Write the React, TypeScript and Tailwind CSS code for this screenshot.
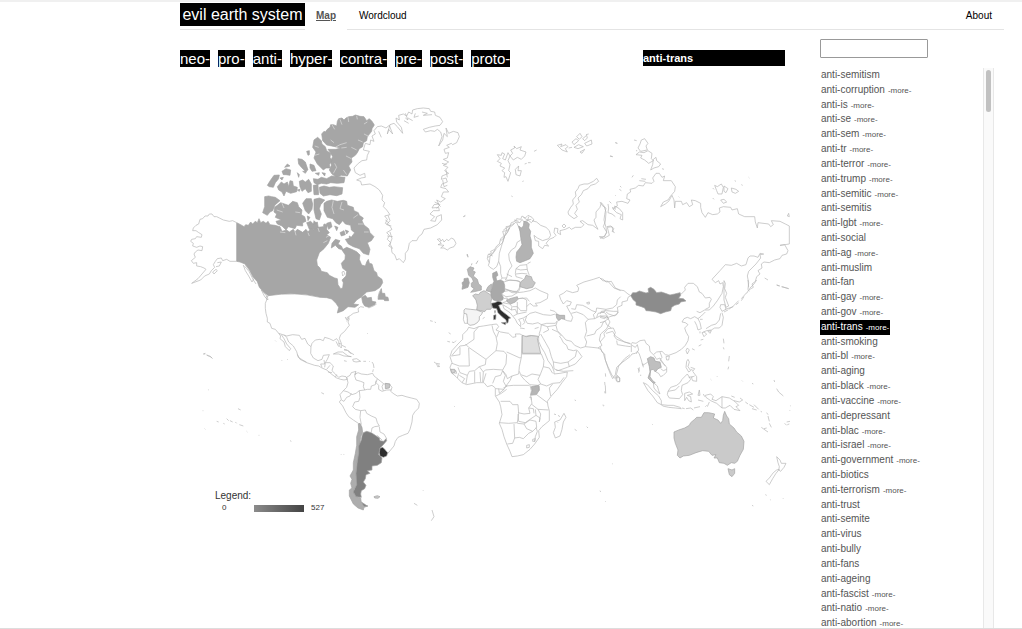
import { useState } from "react";

const prefixes = ["neo-", "pro-", "anti-", "hyper-", "contra-", "pre-", "post-", "proto-"];

const terms: { name: string; more?: boolean }[] = [
  { name: "anti-semitism" },
  { name: "anti-corruption", more: true },
  { name: "anti-is", more: true },
  { name: "anti-se", more: true },
  { name: "anti-sem", more: true },
  { name: "anti-tr", more: true },
  { name: "anti-terror", more: true },
  { name: "anti-trump", more: true },
  { name: "anti-semitic", more: true },
  { name: "anti-semitis" },
  { name: "anti-lgbt", more: true },
  { name: "anti-social" },
  { name: "anti-ag", more: true },
  { name: "anti-muslim" },
  { name: "anti-fan" },
  { name: "anti-gay", more: true },
  { name: "anti-gov", more: true },
  { name: "anti-trans", more: true },
  { name: "anti-smoking" },
  { name: "anti-bl", more: true },
  { name: "anti-aging" },
  { name: "anti-black", more: true },
  { name: "anti-vaccine", more: true },
  { name: "anti-depressant" },
  { name: "anti-blac", more: true },
  { name: "anti-israel", more: true },
  { name: "anti-government", more: true },
  { name: "anti-biotics" },
  { name: "anti-terrorism", more: true },
  { name: "anti-trust" },
  { name: "anti-semite" },
  { name: "anti-virus" },
  { name: "anti-bully" },
  { name: "anti-fans" },
  { name: "anti-ageing" },
  { name: "anti-fascist", more: true },
  { name: "anti-natio", more: true },
  { name: "anti-abortion", more: true },
];

// Each region is drawn in its own grid, three units to one map unit.
// A shape is [fill, path]; "none" leaves only the coast or border line.
type Region = { x: number; y: number; shapes: [string, string][]; channels?: string };

const regions: Region[] = [
  // Arctic Canada
  {
    x: 180,
    y: 90,
    shapes: [
      ["#a6a6a6", "M425 132L432 124 436 126 442 118 450 112 452 104 460 104 470 108 472 94 476 86 486 84 492 90 498 84 506 80 518 79 526 75 540 79 552 80 560 92 568 86 576 94 583 105 576 116 575 124 562 140 560 152 550 158 548 170 538 176 532 188 526 196 514 204 516 216 506 228 512 240 502 258 484 256 470 262 456 252 448 240 454 226 452 212 458 200 450 186 444 178 468 178 482 174 465 170 440 165 428 152Z"],
      ["#a6a6a6", "M402 150L413 142 424 152 426 162 436 170 440 182 452 190 450 202 456 212 448 224 450 234 438 234 430 240 418 228 412 222 402 204 408 186 398 172Z"],
      ["#a6a6a6", "M400 266L414 268 424 262 440 266 455 258 475 260 495 262 492 278 472 280 452 278 440 282 424 280 412 284 402 278Z"],
      ["#a6a6a6", "M418 292L432 288 448 292 462 290 488 293 486 312 470 317 450 314 430 318 420 310Z"],
      ["#a6a6a6", "M432 340L440 334 455 330 472 334 490 331 500 334 502 346 520 352 522 362 535 368 538 376 550 384 546 392 552 405 566 416 570 428 582 440 574 452 562 458 570 478 566 495 550 490 538 476 520 470 505 462 496 448 512 444 524 428 514 420 512 406 496 402 488 392 478 404 468 398 458 386 442 382 432 362Z"],
      ["#a6a6a6", "M284 352L292 346 302 338 314 342 325 346 338 334 352 338 356 350 366 360 364 374 374 380 378 394 368 398 368 408 350 406 345 416 325 410 318 420 306 408 292 402 288 394 304 390 286 382 290 372 282 366Z"],
      ["#a6a6a6", "M254 320L266 318 275 320 286 322 300 332 285 345 278 362 270 366 262 376 248 368 254 350Z"],
      ["#a6a6a6", "M262 286L272 270 282 256 298 255 296 266 286 278 280 292 268 290ZM292 290L304 276 312 282 322 276 326 290 330 272 338 274 340 288 352 292 350 305 332 310 318 304 312 318 306 306 296 300ZM306 244L318 236 332 240 330 256 318 254 310 254ZM314 232L322 222 330 228ZM354 206L366 208 376 216 384 240 376 244 364 232 356 222ZM380 184L388 182 388 194 384 196ZM390 222L402 226 408 242 396 244 390 234ZM352 248L358 254 356 262ZM358 274L368 270 376 276 386 268 394 282 394 304 384 308 376 296 366 304 360 290ZM400 286L414 284 416 314 402 314ZM406 250L418 248 416 256ZM426 248L436 250 434 258ZM368 340L378 326 394 326 398 342 396 358 386 372 376 362ZM402 328L418 324 434 330 422 344 418 356 424 372 418 390 408 386 402 360ZM380 398L392 394 400 402 412 396 416 420 388 418ZM352 300L360 298 358 304ZM382 378L390 382 384 392ZM440 400L452 396 456 410 446 418ZM402 392L410 400 400 404ZM464 408L474 412 470 422ZM300 264L310 262 306 270ZM368 244L380 244 376 250ZM480 428L492 422 496 434 484 438Z"],
    ],
    channels: "M456 104L464 118M480 88L486 104M504 82L506 96M530 78L532 88M562 96L552 102M568 140L552 132M548 156L534 150M530 180L514 172M500 158L480 164 466 172M484 174L500 172M514 206L498 198M404 168L416 172M404 196L418 192M290 360L308 366M306 340L312 354M360 368L346 366M460 332L456 352 462 372M486 336L480 356 492 360M534 374L520 384M550 402L534 402M566 426L552 426M460 250L470 232 464 220M500 254L490 240M452 150L462 158",
  },
  // Canada, Alaska, United States
  {
    x: 180,
    y: 200,
    shapes: [
      ["#a6a6a6", "M170 68L182 74 192 80 197 74 205 76 212 66 218 72 226 64 232 68 237 56 242 68 250 64 258 70 264 64 270 74 285 76 300 80 306 94 320 90 328 96 340 88 345 96 352 88 368 97 378 88 384 96 394 84 400 90 414 82 430 80 432 72 442 74 440 88 448 98 440 104 452 112 445 130 432 146 418 158 410 180 412 196 420 204 424 214 442 218 448 226 464 234 472 236 474 254 482 266 488 264 490 248 486 240 498 228 500 214 488 205 484 190 495 178 496 165 486 150 500 142 515 148 530 155 540 165 538 178 545 195 556 198 560 186 565 178 568 190 576 192 582 212 590 218 592 228 606 238 608 248 600 262 585 272 560 276 545 290 530 300 520 312 536 314 525 322 504 320 490 332 472 339 476 322 468 310 455 297 440 293 420 292Q345 274 265 287L250 275 238 262 232 245 220 232 214 222 205 205 195 192 180 186 170 184Z"],
      ["#a6a6a6", "M466 118L480 122 474 132 484 138 490 150 476 146 466 136 454 144 456 130Z"],
      ["#fff", "M486 216L492 214 494 222 488 228Z"],
      ["#a6a6a6", "M496 90L506 94 500 102ZM508 108L514 112 508 118Z"],
      ["#a6a6a6", "M545 292L556 286 562 294 574 292 576 304 588 306 584 314 566 322 554 318 548 308ZM604 266L606 280 614 280 616 290 624 292 626 302 614 302 610 298 594 298 596 286Z"],
      ["none", "M170 68L158 62 148 64 130 60 118 54 110 50 102 50 96 42 88 42 84 48 75 48 68 56 60 58 56 72 48 76 40 84 38 92 48 92 55 97 66 104 64 112 50 110 46 116 35 118 32 124 40 130 38 138 50 142 60 138 68 140 66 152 54 150 46 156 42 162 46 172 34 182 40 190 50 188 50 198 62 200 72 204 78 208 66 222 54 236 35 250 62 240 74 228 88 222 94 212 104 202 100 194 106 184 112 176 124 174 128 182 140 178 150 184 170 184M98 216L108 208 112 212 102 222ZM112 188L124 186 118 198 108 200M190 196L200 206 212 220 222 236 216 246 206 228 196 212ZM196 196L212 214M208 216L220 240 228 252M244 270L262 290 264 300 254 290Z"],
      ["none", "M265 288L258 290 260 300 256 310 256 325 258 340 262 355 262 366 270 370 275 385 286 388 296 400 302 408 300 416 312 426 316 440 328 452 332 446 320 432 312 416 304 404 M312 404L320 412 326 426 340 438 350 455 355 472 368 480 380 487"],
      ["none", "M296 400L320 408 338 404 358 406 365 418 375 415 383 432 393 440 396 430 406 420 420 418 430 422 434 412 448 416 460 422 470 416 476 424 478 438 484 444 484 430 478 415 482 404 494 394 500 386 508 376 504 366 508 356 502 352 512 346 520 340 536 336 534 326 542 320 552 322M500 360L496 352 504 358M508 350L500 364M70 462L76 460M80 464L86 468 92 470 98 476M486 436L498 442M492 450L506 452 514 462M286 422L288 424M562 400L564 402"],
      ["none", "M566 324L580 318 590 312M594 292L598 276 604 266"],
    ],
    channels: "M192 198L206 210 214 226M300 96L316 98M345 94L348 106M384 98L388 108M414 84L418 96M430 128L442 122M446 108L438 112",
  },
  // Greenland and Iceland
  {
    x: 340,
    y: 90,
    shapes: [
      ["none", "M102 122L112 110 124 108 138 114 148 106 158 132 146 118 142 132 150 104 162 100 172 110 188 130 184 112 170 96 168 84 178 90 176 76 190 72 200 78 206 66 216 72 218 60 232 56 250 54 268 56 272 64 284 66 286 76 300 82 308 95 300 106 286 108 268 112 250 118 256 126 272 122 284 124 292 118 302 126 306 140 296 168 308 150 312 130 322 140 318 114 326 130 340 124 354 128 358 140 350 158 338 164 334 160 320 166 328 172 312 178 316 190 326 188 322 204 310 208 326 216 310 226 324 232 314 242 326 250 306 258 304 268 318 264 322 276 306 282 302 292 318 296 326 306 310 306 304 320 316 326 302 336 290 330 296 342 282 344 276 354 296 352 298 362 280 362 270 372 284 380 272 392 286 394 290 380 304 374 305 390 292 404 272 414 252 418 246 432 236 440 230 452 216 452 208 460 204 480 196 490 196 508 190 518 178 506 170 510 164 494 156 488 154 472 146 468 152 458 142 448 148 436 140 428 156 418 148 406 136 400 142 388 134 378 150 374 140 360 130 350 134 338 126 330 128 316 118 300 105 290 90 282 65 285 62 274 50 270 64 264 76 262 74 250 60 256 46 248 42 234 55 220 66 212 80 210 82 196 88 184 70 180 76 160 90 164 92 150 102 154 96 138 106 132ZM116 124L124 142M204 84L218 92M192 92L206 100M226 70L222 82 236 78M136 390L148 400M142 438L158 440M318 240L322 262M292 340L302 350M196 70L204 90 196 84M246 66L262 70 250 76 276 74M144 376L150 392 140 404 154 408M150 426L156 446 150 462 158 476M306 220L320 224M308 270L312 290 322 286M284 336L300 344 290 356"],
      ["none", "M292 448L300 446 302 454 308 448 312 456 320 448 326 452 334 444 342 448 348 460 342 470 330 474 322 480 312 474 302 474 312 466 294 464 304 460ZM370 380L376 376M380 494L384 500"],
    ],
  },
  // Northern Europe and the Barents Sea
  {
    x: 440,
    y: 120,
    shapes: [
      ["none", "M172 104L184 106 186 98 194 102 188 116 196 120 204 98 210 108 204 122 210 134 206 152 212 158 204 184 198 170 192 172 194 158 186 152 194 144 180 138 184 130 172 124 180 116ZM210 108L218 100 212 90 224 84 222 78 230 86 244 80 240 90 258 96 254 108 244 118 232 112 220 120ZM226 148L236 138 234 152 244 152 240 168 228 164ZM254 132L260 130M264 128L272 128M282 94L290 90M248 186L250 182M214 228L218 230"],
      ["none", "M352 76L366 72 362 80 378 74 384 80 376 86 382 96 366 90 360 84ZM396 66L408 56 416 62 402 74ZM410 50L420 40 426 50 418 58ZM428 56L440 46 442 54 434 62ZM434 70L454 60 456 72 440 78ZM402 82L416 74 430 80 414 86ZM420 96L434 88 426 100ZM386 84L396 82M438 44L446 42M526 68L532 70M510 108L518 110M70 290L76 288"],
      ["none", "M470 175L476 184 466 192 452 196 444 206 430 212 424 224 414 234 418 246 408 256 412 268 404 280 412 290 402 296 386 284 384 276 392 262 400 252 398 240 408 228 406 216 414 206 418 196 432 192 444 192 460 184Z"],
      ["none", "M160 448L150 442 145 436 148 428 142 416 144 404 154 400 152 394 164 388 170 378 178 372 182 356 192 348 188 334 200 332 198 320 210 318 214 308 226 304 230 296 242 298 246 288 256 294 264 286 276 292 282 300 274 308 264 300 252 306 246 298 240 308 228 306 218 316 208 322 202 338 194 348 188 368 176 378 166 388 160 396 150 410 148 428M144 412L156 404 168 388M146 402L158 408M182 362L192 354 198 334 210 324M190 330L206 320 222 310M222 300L236 304M250 292L262 300 274 298M266 290L262 304"],
      ["none", "M160 448L170 440 176 424 178 400 184 380 188 366 194 348 204 334 210 322M176 424L182 440 182 460 186 474 200 474 206 452 216 438 208 420 206 402 214 390 226 382 232 366 240 362 246 356 240 330 230 308"],
      ["#b3b3b3", "M236 318L244 324 250 318 252 304 262 306 268 312 266 324 272 334 270 348 274 362 274 382 280 400 270 416 256 422 240 428 230 424 228 412 230 396 240 384 246 374 242 352 240 334Z"],
      ["none", "M276 302L290 306 302 316 318 322 328 332 332 346 326 356 308 362 292 354 282 346 286 362 296 364 296 378 308 386 314 376 326 378 318 370 328 358 342 352 348 346 342 338 344 324 354 326 352 338 362 344 360 332 376 328 388 322 394 328 406 322 424 322 432 314 420 304 428 302 444 314 458 316 474 328 466 312 462 300 468 292 468 276 480 262 484 248 492 258 498 276 496 304 490 320 500 336 494 350 478 350 490 356 508 346 502 322 516 320 520 336M366 318L372 312 378 318 372 324Z"],
      ["#b8b8b8", "M82 448L90 440 102 444 98 452 106 456 100 468 112 478 116 492 124 498 124 510 108 514 92 517 102 506 94 500 94 490 100 484 96 474 86 466ZM82 402L84 412M108 432L114 422M94 436L96 430"],
      ["#a9a9a9", "M66 488L72 484 72 476 84 474 88 488 84 502 66 508 68 496Z"],
      ["none", "M186 474L180 484 160 478M200 474L196 480 228 482 240 486 238 504 230 516 210 512 196 508M216 470L200 462M226 460L228 446 240 436 260 434 264 430 272 426M260 434L262 450 268 466M228 462L246 460 262 462M228 446L242 450 262 448M226 460L228 470 248 476"],
    ],
  },
  // Siberia, Mongolia, Far East
  {
    x: 600,
    y: 120,
    shapes: [
      ["none", "M0 355L10 352 20 338 18 322 12 300 14 284 18 264 8 258 0 246M20 320L32 318 42 326 36 334 44 338M24 252L26 264 24 278 36 282 46 290M36 262L46 268 44 258 58 266 68 278 68 300 60 296 64 284 50 278 38 266 52 258 50 246 66 244 84 250 90 240 80 236 82 222 92 216 90 208 106 204 116 196 130 198 136 188 156 190 162 184 158 174 168 160 178 160 186 172 194 168 190 182 214 182 226 200 224 214 212 228 204 240 190 246 182 260 196 252 206 244 216 226 222 240 224 264 226 244 244 244 248 254 260 248 268 260 278 254 274 240 286 242 302 250 302 262 306 278 316 292 324 278 338 284 352 282 360 276 358 264 370 260 392 262 396 270 412 266 416 282 434 290 464 290 466 306 472 324 474 308 506 312 512 320 520 314 514 302 540 304 556 312 568 318 568 372 540 376 554 374 564 392 560 402 546 406 540 416 524 420 508 428 492 426 484 432 486 444 474 452 480 462 470 470 466 484 456 492 460 502 446 510 440 520"],
      ["none", "M492 402L480 404 482 414 468 432 446 454 442 468 446 488 444 508 448 514M490 402L480 400 474 412 462 408 450 408 444 414 438 434 424 438 410 430 394 436 376 434 360 452 336 478 346 488 356 482 360 492 368 488 370 500 366 520 352 542 340 558 328 570 314 570 300 578 290 574M372 482L376 490 374 506 380 520 376 532 386 558 378 562 372 540 372 512ZM432 530L424 542M416 548L408 554M400 560L376 568M560 570"],
      ["none", "M120 72L124 60 134 56 144 70 138 78 142 90 122 94 114 84ZM118 96L132 98 144 92 156 100 154 116 160 122 146 130 134 120 122 114 126 106 108 104ZM160 118L168 112 170 122 182 132 176 140 162 144 152 150 158 134ZM344 196L352 200 364 192 370 202 366 222 354 222 350 212ZM372 198L384 206 378 218 372 214ZM394 204L408 208 416 214 406 220 396 216ZM362 240L372 238 380 246 370 250ZM562 288L566 280 568 290ZM102 60L110 62M46 68L52 70M30 108L38 110M186 146L192 148M118 182L136 184M124 176L138 178M60 198L64 202M58 208L64 212M96 172L100 166M46 226L48 228M338 204L342 208M338 234L342 238M404 182L408 184M424 194L428 196M446 172L448 174M28 244L34 250M494 474L504 480M530 494L538 498M544 500L552 502 566 506M236 230L238 232M110 90L110 94"],
      ["#8c8c8c", "M92 527L98 518 108 518 118 513 128 516 138 519 146 517 144 506 152 502 162 508 170 518 184 516 196 520 210 525 224 522 240 518 242 526 236 535 250 536 258 543 242 546 238 552 224 556 215 562 212 572 196 576 182 581 168 576 150 573 138 572 134 564 124 560 108 555 108 546 100 540Z"],
      ["none", "M240 518L244 522 256 510 254 502 264 490 280 490 292 500 298 516 306 520 316 534 330 532 334 538 328 550 328 562 316 568M0 475L10 478 18 486 34 484 46 504 60 510 72 512 84 522 92 527 84 532 82 542 66 546 66 556 52 562 54 574 40 574 20 572 4 574 0 582M0 588L20 594 30 590 50 584 54 574"],
    ],
  },
  // Europe, Africa, Middle East
  {
    x: 430,
    y: 260,
    shapes: [
      ["#cfcfcf", "M128 107L136 102 146 104 150 98 162 92 172 98 187 108 184 120 182 130 186 142 182 148 170 148 164 155 152 152 140 150 142 136 138 120Z"],
      ["#f4f4f4", "M102 150L106 146 122 148 140 150 158 157 154 164 148 170 148 180 142 188 132 194 120 196 112 190 112 176 110 162 102 160Z"],
      ["none", "M102 160L100 178 104 190 112 190M158 176L164 172"],
      ["#a9a9a9", "M188 40L200 34 204 46 198 50 200 64 210 60 220 64 224 76 224 94 214 102 220 112 218 120 204 124 190 120 184 110 182 96 186 86 188 72 192 64 188 52Z"],
      ["#bdbdbd", "M174 80L184 72 186 84 182 96 168 92ZM230 120L240 116 262 110 264 118 256 126 242 132 232 126ZM378 162L390 166 404 166 404 178 394 176 386 182 380 174Z"],
      ["#2d2d2d", "M184 130L194 128 204 124 214 126 217 132 206 136 212 150 222 158 230 164 242 174 236 176 234 188 230 190 228 180 216 170 204 158 200 146 188 144ZM214 188L228 187 226 194ZM191 166L198 164 197 178 191 179ZM194 152L196 152 195 160Z"],
      ["#c6c6c6", "M270 80L272 66 284 56 288 46 304 50 308 62 316 68 308 82 290 86Z"],
      ["none", "M222 66L240 60 264 62 272 66 270 84 266 94 248 94 236 90 224 86M224 94L236 92 246 98 262 98M214 102L228 110 246 108 262 98M220 116L232 114 230 124 218 128M262 98L280 96 300 92 316 84 330 92 354 102 352 116 330 128 316 130 322 138 310 138 300 130 290 140 290 120 278 114 264 116M262 126L262 140 272 152 290 152 290 140M264 116L290 114 298 124M218 128L226 130 240 132 246 140 244 150 232 142 218 134 222 146 240 158 248 168 256 178 262 190 272 200 272 188 266 178 280 174 290 168M244 150L256 148 262 162 250 168M262 162L290 156M248 140L262 140 262 160M280 176L284 188 278 194M270 204L284 206"],
      ["none", "M290 168L300 160 316 156 340 164 362 166 376 162 M290 168L286 180 292 190 308 192 324 188 334 194 350 190 376 190 382 182M334 194L332 208 328 220 328 228M360 150L374 154 384 164M400 132L392 118 388 106 400 100 410 92 428 98 444 94 446 84 440 76 462 66 490 58 508 52 518 62 534 64 552 84 572 92 M400 132L410 122 424 126 420 136 410 138 416 150 422 160 428 172 424 184 412 182 402 178M424 146L436 148 440 134 458 136 470 142 486 152 498 156 500 144 528 148 548 144 560 134 562 120 572 110M424 160L440 156 460 164 474 178 466 188 470 214 464 232 470 246 466 260 452 264 434 256 424 244 408 240 394 224 382 212 378 196 382 184M474 178L494 176 510 168 530 168 536 176 520 186 514 200 498 212 494 222 470 228M498 156L490 164 494 176M500 172L504 160 522 156 528 148M470 128L478 126 478 132 472 132Z"],
      ["none", "M332 222L340 236 348 250 358 268 364 290 370 306 372 326 384 332 412 322 436 312 456 290 446 276 440 270 430 272 414 268 410 256 400 248 394 236 388 228M334 194L352 200 378 196M352 200L356 210 340 218M366 208L384 216 394 228M370 306L392 310 414 306 436 290 440 272M414 306L418 320M466 260L486 262 504 264 512 268 520 280 526 300 534 320 546 346 556 356 560 340 566 318 584 296 600 284M530 168L540 186 530 206 512 222 508 240 516 256 504 264M528 220L548 214 556 228 584 246 600 250M562 346L570 354 568 366 560 362Z"],
      ["none", "M116 202L132 206 146 200 160 198 184 194 200 192 206 200 198 210 212 216 236 220 248 232 258 230 256 222 270 222 284 230 300 226 326 230 326 244 334 262 344 278 354 302 366 318 372 334 372 342 390 340 412 336 410 350 396 368 382 388 364 408 352 424 354 438 358 452 358 482 336 500 326 512 328 532 314 552 300 568 280 584 262 588 246 590 240 574 230 552 222 530 216 508 208 490 216 464 212 440 208 426 196 408 196 384 186 376 172 380 162 368 140 368 110 374 96 368 78 350 64 338 60 322 66 308 60 290 66 272 84 252 98 238 98 224 112 210Z"],
      ["none", "M402 460L408 472 400 486 396 508 390 528 376 534 370 518 376 502 374 486 390 480Z"],
      ["#dfdfdf", "M277 226L290 230 304 227 326 229 322 236 332 280 277 280Z"],
      ["#b5b5b5", "M304 380L326 376 328 390 320 403 302 404 306 392Z"],
      ["none", "M66 286L90 258 106 256 132 238 132 216 146 200M106 252L116 262 168 298 198 272 202 250 198 230 190 214 186 196M200 232L206 216M90 262L90 284 64 288M116 264L118 318 88 318 66 310M168 298L166 314 148 320 134 332 118 334 112 346 90 338 84 322M148 320L160 336 166 330 190 328 218 330 228 312 230 284 222 274 198 272M230 276L270 294 274 292 276 228M274 292L268 320 266 342 246 348 232 356 228 344 218 332M276 282L334 282 342 302 340 320 330 346 306 342 290 350 272 344 268 334M340 320L358 324 368 340M330 346L324 358 332 372 350 378 368 370 390 368 402 352M272 346L284 360 300 374 324 376 332 372M246 348L240 362 228 378 250 376 270 376 298 376M112 346L108 372M134 334L134 368M150 336L152 366M160 336L158 366M86 340L82 354M96 368L104 356 88 346M160 366L168 340M218 332L212 346 196 350 188 370M218 332L226 346 220 364 228 378 222 388 198 386M206 386L208 400 222 388M198 408L214 400 230 388M212 424L240 424 248 434 264 434 266 460 262 488 236 490 208 488M300 376L304 392 302 408 306 430 296 444 300 460 282 462 264 458M302 406L320 404 352 428M304 432L324 448 356 450M328 392L328 378M362 408L358 384 368 372M316 448L318 466 330 474 328 486 332 462 324 448M264 462L266 484 286 488 300 478 318 466M262 490L282 492 300 480 318 484 320 502 308 514 290 506 282 492M252 492L254 534 248 550 232 552M254 534L268 532 280 536 296 520 308 514M318 502L322 514 316 530 314 546M290 556L298 554 298 562 290 564ZM308 538L316 536 314 544 308 544ZM296 444L310 446 312 460M298 412L304 412 304 420M62 330L78 332 80 340 66 338"],
      ["none", "M220 384L232 378M52 244L60 246M66 246L72 248 78 242M56 218L62 222M0 182L8 184M14 186L18 188M18 310L30 312M22 318L30 320M378 330L400 334 430 332M526 340L527 350M526 376L527 400M520 434L522 436M372 462L378 464M384 466L390 470M434 508L440 512M434 420L438 422M382 486L384 488M72 438L74 440M470 500L474 504M314 206L326 202"],
      ["#d4d4d4", "M62 328L74 328 76 336 66 340Z"],
    ],
  },
  // South and East Asia, Oceania
  {
    x: 600,
    y: 280,
    shapes: [
      ["none", "M0 186L14 170 12 160 24 146 40 144 46 158 42 168 50 178 74 186 92 192 96 188 108 190 120 182 134 180 138 190 148 198 150 214 160 224 170 216 186 214 196 224 206 226 228 218 244 208 256 196 264 182 266 170 258 156 254 144 264 134 256 128 246 126 252 116 262 112 272 116 284 110 294 116 304 108 316 96M294 116L300 128 304 146 294 150 290 136 284 124M0 200L6 216 14 222 16 240 24 264 32 284 38 296 46 284 50 262 66 248 90 230 96 222 106 220 112 214M94 192L94 216M96 196L106 202 112 194 116 210 108 222M112 214L118 222 124 240 128 256 138 250 146 244M50 290L58 294 60 304 52 306 48 300ZM50 182L52 194 76 198 92 200M0 128L16 124 20 134 34 144M18 96L26 102 44 108 56 96M0 112L14 116 22 108 14 98 4 96M300 118L308 118"],
      ["none", "M362 74L374 74 378 88 366 94 360 82ZM366 98L370 112 366 136 358 144 344 144 334 150 320 152 310 156M362 100L358 120 348 132 334 136 318 146M312 156L320 162 312 170 306 158ZM324 154L334 152 330 160ZM302 180L310 178M296 198L304 194M276 206L284 210M262 204L268 210 262 222 258 212ZM198 230L208 228 206 240 200 240ZM372 96L384 90 M300 154L300 160"],
      ["none", "M162 226L170 238 180 234 190 250 200 262 200 276 190 286 182 290 176 280 168 276M180 216L186 232 180 240 196 258M182 266L190 272 200 268M128 250L130 262M114 264L118 274"],
      ["#bfbfbf", "M142 236L152 230 162 234 166 244 180 246 184 262 174 266 166 276 160 268 152 270 150 290 158 302 166 308 160 310 150 300 144 294 150 276 148 260Z"],
      ["none", "M160 308L172 318 176 332 180 342 170 334 162 324ZM130 308L142 314 158 332 176 348 184 362 184 374 172 368 158 348 144 332ZM184 374L204 376 220 376 240 382 244 386 226 384 206 382 188 378ZM246 384L254 386M258 386L272 384 280 390M282 384L300 380M204 334L212 322 230 316 240 308 246 298 262 282 272 298 264 308 246 316 244 332 248 344 238 356 208 354 202 344ZM204 334L226 330 238 318M264 238L268 246 264 260 272 272 266 276 258 262 260 244ZM272 262L284 266 280 272 272 268M278 274L290 290 290 304 278 302 274 292 284 288M266 292L278 290M254 340L268 336 278 342 262 346 272 350 274 366 266 362 260 352 254 362ZM298 330L300 346 294 346ZM294 360L310 364M316 346L332 342 340 350 336 358 348 362 366 350 388 354 404 364 416 376 408 380 420 392 402 388 390 376 376 384 366 384 350 370 332 362 318 352ZM366 350L366 384M394 348L404 352M402 362L418 366 428 360 420 354M436 366L444 372M448 374L462 382M456 386L470 390M462 374L476 388M482 394L486 396M500 398L504 404M504 408L508 424M508 430L514 442M484 442L498 452 504 456M500 444L492 446M554 430L560 436M560 426L570 424M562 434L568 432M310 342L314 350M322 380L328 366M316 380L320 376"],
      ["#cacaca", "M222 456L236 450 254 444 268 436 272 428 284 418 290 412 304 412 312 398 326 398 344 402 340 414 354 420 362 430 368 422 370 406 374 394 380 408 386 416 388 432 402 444 410 456 424 468 432 484 430 508 420 526 412 544 404 550 394 548 382 556 372 550 358 548 352 534 342 534 348 524 336 526 326 514 308 512 288 518 268 526 250 528 240 534 232 526 234 510 226 490 222 474ZM384 566L396 570 404 566 404 580 396 590 388 584Z"],
      ["none", "M530 530L540 540 544 550 558 550 552 562 542 574 536 570 538 560 534 548ZM538 568L528 580 518 596 508 614 498 604 508 594 520 578 530 570ZM496 644L500 646M510 658L512 660M456 676L460 678M548 654L550 656M0 632L2 636M16 664L18 666M156 432L158 434M36 550L38 552M388 228L386 244M386 260L384 268M370 176L372 190M370 202L372 208M332 298L334 300M350 288L352 290M426 302L428 304M456 310L460 312M522 300L524 306M530 326L536 336 550 348M568 390L570 392M570 376L572 378M14 306L15 316M14 334L15 340M118 262L116 278M122 284L122 288M8 376L12 378M470 0L462 12 448 26M444 0L446 22M440 38L424 56M416 62L398 80 386 88M530 16L540 18M546 20L566 26"],
    ],
  },
  // Central and South America
  {
    x: 190,
    y: 340,
    shapes: [
      ["none", "M363 20L362 40 370 54 384 62 396 58 400 46 418 44 412 58 406 68 420 68 430 78 426 92 436 102 446 112 456 108 468 110 472 118 462 120 452 118 440 114 424 102 410 90 396 84 386 78 374 76 350 68 330 58 322 44M396 82L392 72 404 72 402 60M406 68L404 82M410 88L420 76M426 98L414 96M436 112L440 104"],
      ["none", "M430 42L444 36 458 36 474 48 484 50 462 48 446 42ZM488 58L500 56 512 64 498 66 490 64ZM462 62L470 64M520 64L528 64M538 64L540 66M546 66L550 72 552 84M550 88L548 96M446 10L454 12M438 4L446 20M462 28L472 30M474 34L492 44M40 42L46 42M50 46L58 48 66 54M394 158L402 162M144 206L152 210M80 244L86 246M110 236L116 242M120 242L128 246M136 246L140 250M100 250L104 252M148 254L160 258M54 148L56 150M170 274L172 276M300 302L304 304M452 342L454 344M460 342L462 344M732 66L738 70M738 74L748 76M742 80L746 80M726 510L732 530 724 542M672 490L682 496M698 450L700 452M274 60L276 62M292 58L294 60M38 212L40 212M44 266L46 268M206 286L208 286"],
      ["none", "M470 112L480 106 484 98 498 94 494 104 504 98 514 102 532 104 548 100 552 108 562 116 572 124 582 132 598 132 606 142 602 154 612 162 622 168 636 166 648 170 664 174 680 178 688 190 686 204 674 216 668 226 666 246 660 268 654 280 638 286 624 292 616 304 612 318 602 330 592 342"],
      ["none", "M470 112L474 128 470 142 460 152 450 164 454 178 448 186 458 198 468 218 476 230 490 240 508 252"],
      ["none", "M498 98L494 108 498 120 512 124 522 128 520 140 524 150 508 152 510 172 506 184M460 152L474 156 486 164 498 160 508 152M454 180L462 184 470 172 480 168 484 160M506 184L494 186 488 200 496 208 512 212 510 232 514 254M512 212L526 210 530 220 544 228 558 234 562 248 568 258 554 260 546 264 544 276M568 260L570 276 582 282 590 296 580 304M524 150L532 148 542 148 544 138 556 134 558 122M562 116L558 128 566 136 566 148 576 154M576 154L590 150 604 150M580 132L576 140 580 152M562 286L576 300"],
      ["#adadad", "M505 252L510 250 516 262 518 278 512 290 510 310 506 326 506 344 502 360 500 376 498 400 500 420 500 436 492 448 492 462 500 470 512 474 514 488 522 496 534 498 522 502 520 510 504 504 490 492 484 480 478 468 478 450 486 444 482 430 486 418 480 408 490 390 490 368 496 340 500 316 500 290 506 270Z"],
      ["#808080", "M520 278L530 274 544 278 556 286 568 294 570 302 582 304 588 296 590 302 580 314 570 324 566 344 576 354 574 368 562 376 546 378 546 390 532 392 540 400 528 404 526 416 520 426 528 436 524 446 514 452 512 462 514 472 498 470 490 456 494 446 500 434 498 400 502 362 506 340 506 318 514 300 516 288ZM514 486L520 490 532 498 522 499Z"],
      ["#2d2d2d", "M570 325L578 322 584 328 593 338 590 348 580 352 570 348 568 338Z"],
      ["#c8c8c8", "M586 130L600 132 598 144 586 146ZM552 470L562 467 570 470 564 475 554 474Z"],
    ],
  },
];

function WorldMap() {
  return (
    <svg
      viewBox="180 70 640 454"
      className="block w-full h-auto"
      role="img"
      aria-label="World map"
    >
      {regions.map((region) => (
        <g
          key={`${region.x}-${region.y}`}
          transform={`translate(${region.x} ${region.y}) scale(0.33333)`}
          strokeLinejoin="round"
        >
          {region.shapes.map(([fill, d], i) => (
            <path
              key={i}
              d={d}
              fill={fill}
              stroke={fill === "none" || fill === "#fff" ? "#b4b4b4" : "#a2a2a2"}
              strokeWidth={2}
            />
          ))}
          {/* Fjords and straits cut into the filled land */}
          {region.channels && (
            <path d={region.channels} fill="none" stroke="#e0e0e0" strokeWidth={2} />
          )}
        </g>
      ))}
    </svg>
  );
}

function Legend() {
  return (
    <div className="absolute left-[35px] bottom-3 text-[#333]">
      <div className="text-[10px] leading-3">Legend:</div>
      <div className="flex items-center mt-0.5 text-[8px] leading-2">
        <span className="w-8 pl-[7px]">0</span>
        <span className="w-[50px] h-[7px] mx-[7px] bg-linear-to-r from-[#8c8c8c] to-[#444]" />
        <span>527</span>
      </div>
    </div>
  );
}

export default function App() {
  const [query, setQuery] = useState("");
  const [selected, setSelected] = useState("anti-trans");

  return (
    <div className="h-screen flex flex-col overflow-hidden bg-white border-t-2 border-[#f0f0f0] border-b border-b-[#ddd] pl-[180px] pr-[18px] font-['Liberation_Sans',Arial,sans-serif] text-[10px] text-black">
      <header className="flex shrink-0 h-7">
        <div className="border-b border-[#e4e4e4] pt-px">
          <h1 className="bg-black text-white text-[16px] leading-[23px] w-[125px] text-center whitespace-nowrap">
            evil earth system
          </h1>
        </div>
        <nav className="flex flex-1 leading-7">
          <a href="#map" className="w-[42px] pl-[11px] font-bold underline text-[#555]">
            Map
          </a>
          <div className="flex flex-1 justify-between border-b border-[#e4e4e4] pl-3 pr-3">
            <a href="#wordcloud">Wordcloud</a>
            <a href="#about">About</a>
          </div>
        </nav>
      </header>

      <div className="flex flex-1 min-h-0">
        <main className="flex-1 min-w-0 pt-5">
          <div className="flex justify-between pr-[35px]">
            <div className="flex gap-2">
              {prefixes.map((prefix) => (
                <button
                  key={prefix}
                  className="bg-black text-white text-[15px] leading-[17px] cursor-pointer"
                >
                  {prefix}
                </button>
              ))}
            </div>
            <div className="w-[142px] h-4 bg-black text-white text-[11px] leading-4 font-bold">
              {selected}
            </div>
          </div>

          <div className="relative mt-[3px]">
            <WorldMap />
            <Legend />
          </div>
        </main>

        <aside className="w-[184px] shrink-0 flex flex-col pt-[9px]">
          <input
            type="text"
            aria-label="Search terms"
            value={query}
            onChange={(e) => setQuery(e.target.value)}
            className="w-[108px] h-[19px] shrink-0 px-1 border border-[#999] rounded-[1px] outline-none"
          />
          <div className="flex flex-1 min-h-0 mt-2.5 mr-2.5 overflow-hidden">
            <ul className="grid auto-rows-fr h-[563px] flex-1">
              {terms
                .filter((term) => term.name.includes(query))
                .map((term) => (
                  <li key={term.name} className="min-h-0">
                    <button
                      onClick={() => setSelected(term.name)}
                      className={`block px-px leading-[14px] whitespace-nowrap cursor-pointer ${
                        term.name === selected ? "bg-black text-white" : "text-[#555]"
                      }`}
                    >
                      {term.name}
                      {term.more && <span className="text-[8px] ml-[3px]">-more-</span>}
                    </button>
                  </li>
                ))}
            </ul>
            {/* Scroll track */}
            <div className="w-[11px] shrink-0 bg-[#fafafa] border-x border-[#e8e8e8] pt-0.5 px-0.5">
              <div className="h-[42px] rounded-full bg-[#c1c1c1]" />
            </div>
          </div>
        </aside>
      </div>
    </div>
  );
}
